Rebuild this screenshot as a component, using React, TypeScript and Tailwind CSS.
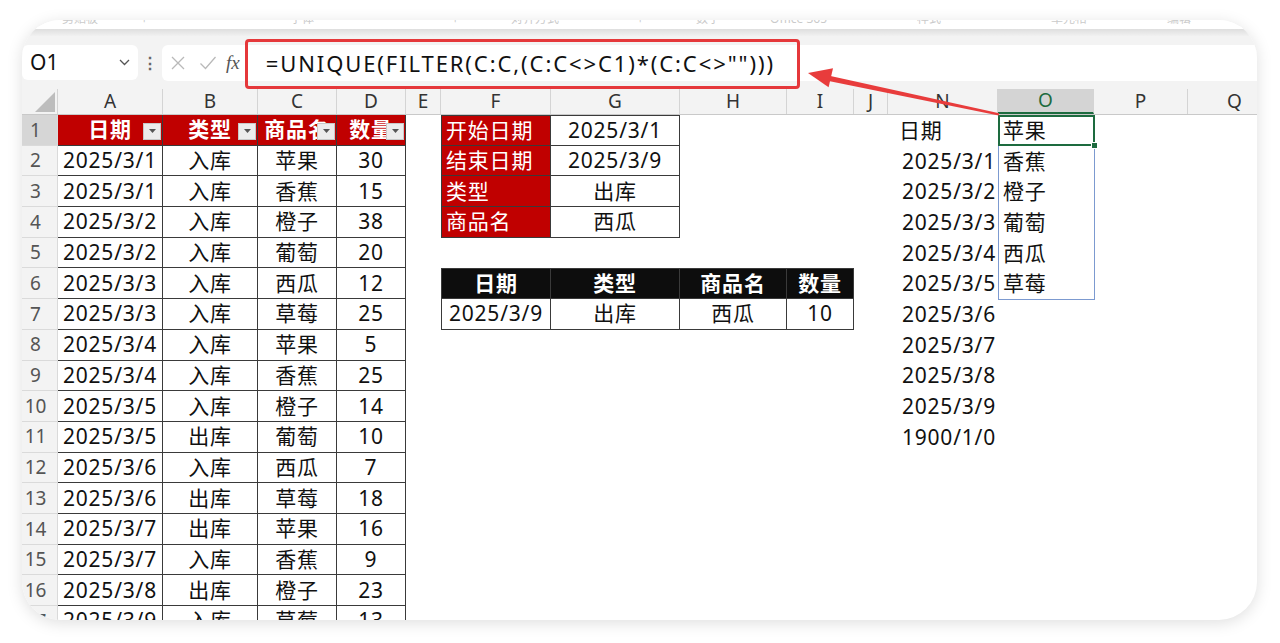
import React from "react";

type Col = { key: string; w: string };

const cols: Col[] = [
  { key: "A", w: "w-[105px]" },
  { key: "B", w: "w-[95px]" },
  { key: "C", w: "w-[79px]" },
  { key: "D", w: "w-[69px]" },
  { key: "E", w: "w-[35px]" },
  { key: "F", w: "w-[110px]" },
  { key: "G", w: "w-[129px]" },
  { key: "H", w: "w-[107px]" },
  { key: "I", w: "w-[67px]" },
  { key: "J", w: "w-[34px]" },
  { key: "N", w: "w-[110px]" },
  { key: "O", w: "w-[96px]" },
  { key: "P", w: "w-[94px]" },
  { key: "Q", w: "w-[94px]" },
];

const records = [
  ["2025/3/1", "入库", "苹果", "30"],
  ["2025/3/1", "入库", "香蕉", "15"],
  ["2025/3/2", "入库", "橙子", "38"],
  ["2025/3/2", "入库", "葡萄", "20"],
  ["2025/3/3", "入库", "西瓜", "12"],
  ["2025/3/3", "入库", "草莓", "25"],
  ["2025/3/4", "入库", "苹果", "5"],
  ["2025/3/4", "入库", "香蕉", "25"],
  ["2025/3/5", "入库", "橙子", "14"],
  ["2025/3/5", "出库", "葡萄", "10"],
  ["2025/3/6", "入库", "西瓜", "7"],
  ["2025/3/6", "出库", "草莓", "18"],
  ["2025/3/7", "出库", "苹果", "16"],
  ["2025/3/7", "入库", "香蕉", "9"],
  ["2025/3/8", "出库", "橙子", "23"],
  ["2025/3/9", "入库", "草莓", "13"],
];

const criteria = [
  ["开始日期", "2025/3/1"],
  ["结束日期", "2025/3/9"],
  ["类型", "出库"],
  ["商品名", "西瓜"],
];

const dates = [
  "日期",
  "2025/3/1",
  "2025/3/2",
  "2025/3/3",
  "2025/3/4",
  "2025/3/5",
  "2025/3/6",
  "2025/3/7",
  "2025/3/8",
  "2025/3/9",
  "1900/1/0",
];

const fruits = ["苹果", "香蕉", "橙子", "葡萄", "西瓜", "草莓"];

const ribbon = [
  { t: "剪贴板", ml: "ml-[40px]" },
  { t: "⌐", ml: "ml-[45px]" },
  { t: "字体", ml: "ml-[140px]" },
  { t: "⌐", ml: "ml-[140px]" },
  { t: "对齐方式", ml: "ml-[50px]" },
  { t: "⌐", ml: "ml-[80px]" },
  { t: "数字", ml: "ml-[50px]" },
  { t: "Office 365", ml: "ml-[50px]" },
  { t: "样式", ml: "ml-[90px]" },
  { t: "单元格", ml: "ml-[110px]" },
  { t: "编辑", ml: "ml-[80px]" },
  { t: "加载项", ml: "ml-[70px]" },
];

const line = "border-[#3a3a3a]";

function FilterButton() {
  return (
    <span className="absolute right-[1px] bottom-[5px] flex h-[17px] w-[18px] items-center justify-center border border-[#c8c8c8] bg-[#ececec]">
      <svg width="7" height="4" viewBox="0 0 7 4">
        <path d="M0 0h7L3.5 4z" fill="#555" />
      </svg>
    </span>
  );
}

function cellFor(row: number, key: string): { text?: string; cls: string; filter?: boolean } {
  // A:D data table
  const tableIdx = ["A", "B", "C", "D"].indexOf(key);
  if (tableIdx >= 0) {
    if (row === 1) {
      const heads = ["日期", "类型", "商品名", "数量"];
      return {
        text: heads[tableIdx],
        cls: `justify-center bg-[#c00000] text-white font-bold border-r border-b ${line}`,
        filter: true,
      };
    }
    const rec = records[row - 2];
    return {
      text: rec ? rec[tableIdx] : "",
      cls: `justify-center border-r border-b ${line}`,
    };
  }

  // criteria block F1:G4
  if (row <= 4 && (key === "F" || key === "G")) {
    const [label, value] = criteria[row - 1];
    const top = row === 1 ? "border-t" : "";
    if (key === "F")
      return {
        text: label,
        cls: `pl-[4px] bg-[#c00000] text-white border-l border-r border-b ${line} ${top}`,
      };
    return { text: value, cls: `justify-center border-r border-b ${line} ${top}` };
  }

  // result table F6:I7
  const resIdx = ["F", "G", "H", "I"].indexOf(key);
  if (resIdx >= 0 && (row === 6 || row === 7)) {
    const left = resIdx === 0 ? "border-l" : "";
    if (row === 6) {
      const heads = ["日期", "类型", "商品名", "数量"];
      return {
        text: heads[resIdx],
        cls: `justify-center bg-[#0d0d0d] text-white font-bold border-t border-r border-b ${line} ${left}`,
      };
    }
    const vals = ["2025/3/9", "出库", "西瓜", "10"];
    return { text: vals[resIdx], cls: `justify-center border-r border-b ${line} ${left}` };
  }

  if (key === "N" && row <= dates.length) {
    return {
      text: dates[row - 1],
      cls: row === 1 ? "pl-[11px]" : "justify-end pr-[2px]",
    };
  }

  if (key === "O" && row <= fruits.length) {
    return { text: fruits[row - 1], cls: "pl-[5px]" };
  }

  return { cls: "" };
}

function GridRow({ row }: { row: number }) {
  return (
    <div className="flex h-[30.7px] shrink-0">
      <div
        className={`flex w-[36px] shrink-0 items-center justify-center pr-[8px] text-[19px] tracking-normal text-[#555] border-r border-b border-[#dadada] ${
          row === 1 ? "bg-[#d6d6d6]" : "bg-[#f3f3f3]"
        }`}
      >
        {row}
      </div>
      {cols.map((c) => {
        const cell = cellFor(row, c.key);
        return (
          <div
            key={c.key}
            className={`relative flex shrink-0 items-center overflow-hidden whitespace-nowrap leading-none ${c.w} ${cell.cls}`}
          >
            {cell.text}
            {cell.filter && <FilterButton />}
          </div>
        );
      })}
    </div>
  );
}

function Arrow() {
  return (
    <svg
      className="pointer-events-none absolute left-0 top-0"
      width="1280"
      height="643"
      viewBox="0 0 1280 643"
    >
      <polygon points="826,75 827.4,80.8 998.6,115.6 999.2,113.2" fill="#e83c3c" />
      <polygon points="808,73 833,68.2 828.6,87.2" fill="#e83c3c" />
    </svg>
  );
}

export default function App() {
  const rows = Array.from({ length: 17 }, (_, i) => i + 1);
  return (
    <div className="relative h-[643px] w-[1280px] overflow-hidden bg-white font-['Noto_Sans','Noto_Sans_CJK_SC',sans-serif] text-[#111]">
      <div className="pl-[22px] pt-[20px]">
        <div className="flex h-[600px] w-[1235px] flex-col overflow-hidden rounded-[38px] bg-white shadow-[0_3px_16px_rgba(0,0,0,0.13)]">
          {/* clipped ribbon labels */}
          <div className="flex h-[9px] shrink-0 overflow-hidden bg-white">
            <div className="-mt-[8px] flex text-[12px] leading-[14px] text-[#a8a8a8] opacity-60">
              {ribbon.map((r, i) => (
                <span key={i} className={`${r.ml} whitespace-nowrap`}>
                  {r.t}
                </span>
              ))}
            </div>
          </div>
          <div className="h-[7px] shrink-0 bg-gradient-to-b from-[#dedede] to-[#f1f1f1]" />

          {/* formula bar */}
          <div className="relative flex h-[53px] shrink-0 items-center bg-[#f3f3f3]">
            <div className="flex h-[35px] w-[116px] shrink-0 items-center justify-between rounded-[6px] bg-white pl-[8px] pr-[8px]">
              <span className="text-[21px] leading-none">O1</span>
              <svg width="11" height="7" viewBox="0 0 11 7">
                <path d="M1 1l4.5 4.5L10 1" fill="none" stroke="#555" strokeWidth="1.3" />
              </svg>
            </div>
            <div className="flex w-[24px] shrink-0 justify-center text-[16px] font-bold leading-none text-[#666]">⋮</div>
            <div className="flex h-[36px] flex-1 items-center rounded-l-[6px] bg-white">
              <svg className="ml-[8px]" width="16" height="16" viewBox="0 0 16 16">
                <path d="M2 2l12 12M14 2L2 14" stroke="#b9b9b9" strokeWidth="1.3" />
              </svg>
              <svg className="ml-[13px]" width="18" height="16" viewBox="0 0 18 16">
                <path d="M1.5 8.5l5 5L16.5 2" fill="none" stroke="#b9b9b9" strokeWidth="1.3" />
              </svg>
              <span className="ml-[9px] font-['Liberation_Serif',serif] text-[19px] italic leading-none text-[#555]">
                fx
              </span>
              <span className="ml-[26px] text-[22px] leading-none tracking-[1.9px] text-[#111]">
                =UNIQUE(FILTER(C:C,(C:C&lt;&gt;C1)*(C:C&lt;&gt;"")))
              </span>
            </div>
            <div className="pointer-events-none absolute left-[223px] top-[3px] h-[50px] w-[555px] rounded-[4px] border-[3px] border-[#e5383b]" />
          </div>

          {/* column headers */}
          <div className="flex h-[26px] shrink-0 border-b border-[#c9c9c9] bg-[#f3f3f3] text-[19px] leading-none text-[#333]">
            <div className="flex w-[36px] shrink-0 items-end justify-end border-r border-[#d4d4d4] pb-[2px] pr-[2px]">
              <svg width="20" height="20" viewBox="0 0 20 20">
                <path d="M20 0V20H0z" fill="#bdbdbd" />
              </svg>
            </div>
            {cols.map((c) => (
              <div
                key={c.key}
                className={`flex shrink-0 items-center justify-center border-r border-[#d4d4d4] ${c.w} ${
                  c.key === "O" ? "bg-[#d4d4d4] text-[#1d6b3f] border-b-2 border-b-[#1d6b3f]" : ""
                }`}
              >
                {c.key}
              </div>
            ))}
          </div>

          {/* cells */}
          <div className="relative text-[21px] tracking-[0.8px]">
            {rows.map((r) => (
              <GridRow key={r} row={r} />
            ))}
            {/* spill range & active cell */}
            <div className="pointer-events-none absolute left-[976px] top-0 h-[185px] w-[97px] border border-[#7c9ad0]" />
            <div className="pointer-events-none absolute left-[976px] top-0 h-[31px] w-[97px] border-2 border-[#1d6b3f]" />
            <div className="pointer-events-none absolute left-[1069px] top-[27px] h-[7px] w-[7px] border border-white bg-[#1d6b3f]" />
          </div>
        </div>
      </div>
      <Arrow />
    </div>
  );
}
